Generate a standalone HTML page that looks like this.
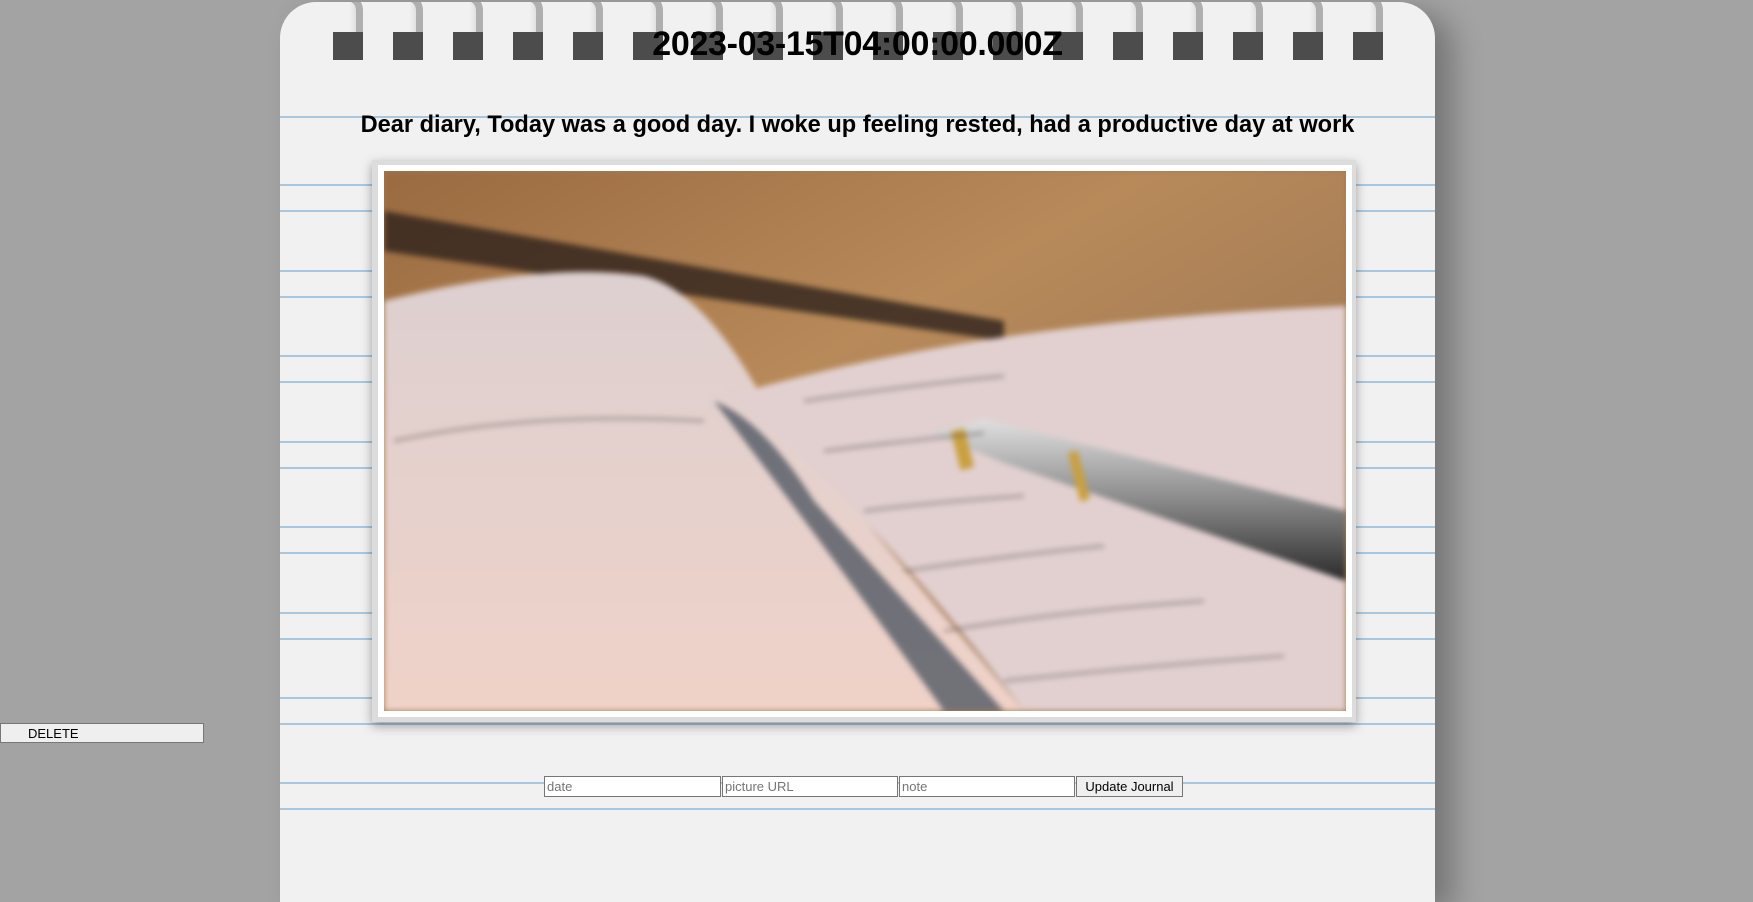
<!DOCTYPE html>
<html><head><meta charset="utf-8"><style>
html,body{margin:0;padding:0;width:1753px;height:827px;overflow:hidden;background:#a3a3a3;font-family:"Liberation Sans",sans-serif;}
.paper{position:absolute;left:280px;top:2px;width:1155px;height:900px;background:#f1f1f1;border-radius:36px 36px 0 0;box-shadow:18px 10px 30px rgba(0,0,0,.28);overflow:hidden;}
.line{position:absolute;left:0;width:100%;height:2px;background:#a9c7dc;}
.ring{position:absolute;top:0;width:32px;height:60px;}
.ring .sq{position:absolute;left:0;top:30px;width:30px;height:28px;background:#4c4c4c;}
.ring .lp{position:absolute;left:10px;top:-8px;width:20px;height:64px;border-radius:0 16px 16px 0;border:7px solid #8e8e8e;border-left:none;box-sizing:border-box;opacity:.9;}
.title{position:absolute;left:0;width:100%;top:23px;text-align:center;font-weight:bold;font-size:34px;color:#000;letter-spacing:-0.3px}
.sub{position:absolute;left:0;width:100%;top:110px;text-align:center;font-weight:bold;font-size:23.6px;color:#000;}
.frame{position:absolute;left:92px;top:158px;width:984px;height:562px;background:#dcdcdc;box-shadow:0 4px 10px rgba(0,0,0,.35);}
.img{position:absolute;left:11px;top:10px;width:962px;height:540px;border:1px solid #fff;outline:5px solid #fff;overflow:hidden;background:#a87a50;}
input,button{font-family:"Liberation Sans",sans-serif;font-size:13px;}
</style></head><body>
<button style="position:absolute;left:0;top:723px;width:204px;height:20px;border:1px solid #777;background:#efefef;text-align:left;padding-left:27px;font-size:13px;">DELETE</button>
<div class="paper">
<div class="line" style="top:114px"></div>
<div class="line" style="top:182px"></div><div class="line" style="top:208px"></div>
<div class="line" style="top:268px"></div><div class="line" style="top:294px"></div>
<div class="line" style="top:353px"></div><div class="line" style="top:379px"></div>
<div class="line" style="top:439px"></div><div class="line" style="top:465px"></div>
<div class="line" style="top:524px"></div><div class="line" style="top:550px"></div>
<div class="line" style="top:610px"></div><div class="line" style="top:636px"></div>
<div class="line" style="top:695px"></div><div class="line" style="top:721px"></div>
<div class="line" style="top:780px"></div><div class="line" style="top:806px"></div>
<div class="sub">Dear diary, Today was a good day. I woke up feeling rested, had a productive day at work</div>
<div class="frame"><div class="img">
<svg width="962" height="540" viewBox="0 0 962 540" style="filter:blur(3px)">
<defs><linearGradient id="bg" x1="0" y1="0" x2="1" y2="1"><stop offset="0" stop-color="#9a6a40"/><stop offset=".4" stop-color="#b88a5a"/><stop offset="1" stop-color="#8a6a50"/></linearGradient>
<linearGradient id="pg" x1="0" y1="0" x2="0" y2="1"><stop offset="0" stop-color="#ddd0d0"/><stop offset="1" stop-color="#efd2c8"/></linearGradient>
<linearGradient id="pen" x1="0" y1="0" x2="0" y2="1"><stop offset="0" stop-color="#e0e0e0"/><stop offset=".5" stop-color="#8a8a8a"/><stop offset="1" stop-color="#2a2a2a"/></linearGradient></defs>
<rect width="962" height="540" fill="url(#bg)"/>
<path d="M0 40 L620 150 L620 170 L0 80Z" fill="#2e221c" opacity=".8"/>
<path d="M0 130 Q160 90 260 105 Q320 120 380 230 L640 540 L0 540Z" fill="url(#pg)"/>
<path d="M345 225 Q600 150 962 135 L962 540 L640 540 Q480 330 345 225Z" fill="#e2d0d0"/>
<path d="M330 230 Q380 250 430 330 L620 540 L560 540 Q430 360 330 230Z" fill="#5a606a" opacity=".85"/>
<path d="M548 262 L600 248 L962 340 L962 410 L620 292Z" fill="url(#pen)"/>
<rect x="572" y="258" width="14" height="40" fill="#c9a040" transform="rotate(-14 580 280)"/>
<rect x="690" y="280" width="10" height="50" fill="#c9a040" transform="rotate(-14 695 305)"/>
<g stroke="#4a4040" stroke-width="2" fill="none" opacity=".6">
<path d="M10 270 Q150 240 320 250"/><path d="M420 230 Q520 215 620 205"/><path d="M440 280 Q520 270 600 262"/>
<path d="M480 340 Q560 330 640 325"/><path d="M520 400 Q620 385 720 375"/><path d="M560 460 Q680 440 820 430"/>
<path d="M620 510 Q760 495 900 485"/></g>
</svg>
</div></div>
<div class="ring" style="left:53px"><div class="lp"></div><div class="sq"></div></div>
<div class="ring" style="left:113px"><div class="lp"></div><div class="sq"></div></div>
<div class="ring" style="left:173px"><div class="lp"></div><div class="sq"></div></div>
<div class="ring" style="left:233px"><div class="lp"></div><div class="sq"></div></div>
<div class="ring" style="left:293px"><div class="lp"></div><div class="sq"></div></div>
<div class="ring" style="left:353px"><div class="lp"></div><div class="sq"></div></div>
<div class="ring" style="left:413px"><div class="lp"></div><div class="sq"></div></div>
<div class="ring" style="left:473px"><div class="lp"></div><div class="sq"></div></div>
<div class="ring" style="left:533px"><div class="lp"></div><div class="sq"></div></div>
<div class="ring" style="left:593px"><div class="lp"></div><div class="sq"></div></div>
<div class="ring" style="left:653px"><div class="lp"></div><div class="sq"></div></div>
<div class="ring" style="left:713px"><div class="lp"></div><div class="sq"></div></div>
<div class="ring" style="left:773px"><div class="lp"></div><div class="sq"></div></div>
<div class="ring" style="left:833px"><div class="lp"></div><div class="sq"></div></div>
<div class="ring" style="left:893px"><div class="lp"></div><div class="sq"></div></div>
<div class="ring" style="left:953px"><div class="lp"></div><div class="sq"></div></div>
<div class="ring" style="left:1013px"><div class="lp"></div><div class="sq"></div></div>
<div class="ring" style="left:1073px"><div class="lp"></div><div class="sq"></div></div>
<div class="title">2023-03-15T04:00:00.000Z</div>
</div>
<style>.ring .lp{border-color:#a8a8a8;background:linear-gradient(90deg,transparent 50%,rgba(120,120,120,.15));}</style>
<input placeholder="date" style="position:absolute;left:544px;top:776px;width:177px;height:21px;box-sizing:border-box;border:1px solid #767676;padding:1px 2px;">
<input placeholder="picture URL" style="position:absolute;left:722px;top:776px;width:176px;height:21px;box-sizing:border-box;border:1px solid #767676;padding:1px 2px;">
<input placeholder="note" style="position:absolute;left:899px;top:776px;width:176px;height:21px;box-sizing:border-box;border:1px solid #767676;padding:1px 2px;">
<button style="position:absolute;left:1076px;top:776px;width:107px;height:21px;border:1px solid #767676;background:#efefef;padding:0;">Update Journal</button>
</body></html>
